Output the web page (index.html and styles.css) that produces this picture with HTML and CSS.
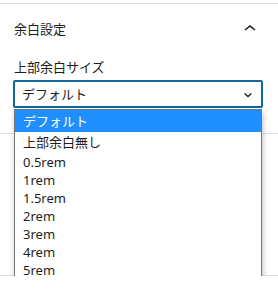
FILE: index.html
```html
<!DOCTYPE html>
<html lang="ja">
<head>
  <meta charset="UTF-8">
  <title>余白設定</title>
  <link rel="stylesheet" href="styles.css">
</head>
<body>
  <div class="sidebar">
    <section class="panel">
      <div class="panel-header">
        <span class="panel-title">余白設定</span>
        <svg class="toggle" width="24" height="24" viewBox="0 0 24 24" aria-hidden="true">
          <path d="M6.5 12.4L12 8l5.5 4.4-.9 1.2L12 10l-4.6 3.6-.9-1.2z"/>
        </svg>
      </div>
      <div class="panel-body">
        <label class="field-label" for="margin-top">上部余白サイズ</label>
        <div class="select">
          <span class="select-value">デフォルト</span>
          <svg class="select-arrow" width="8" height="5" viewBox="0 0 8 5" aria-hidden="true">
            <path d="M0.6 0.6L4 3.6 7.4 0.6" fill="none" stroke="#1e1e1e" stroke-width="1.4"/>
          </svg>
        </div>
      </div>
    </section>
    <section class="panel panel-empty"></section>

    <ul class="dropdown" role="listbox">
      <li class="option jp selected">デフォルト</li>
      <li class="option jp second">上部余白無し</li>
      <li class="option">0.5rem</li>
      <li class="option">1rem</li>
      <li class="option">1.5rem</li>
      <li class="option">2rem</li>
      <li class="option">3rem</li>
      <li class="option">4rem</li>
      <li class="option">5rem</li>
    </ul>
  </div>
</body>
</html>
```

FILE: styles.css
```css
body { margin: 0; background: #fff; font-family: "Noto Sans", "Noto Sans CJK JP", sans-serif; font-size: 13px; color: #1e1e1e;}
.sidebar { position: relative; padding-top: 3px;}
.panel { border-top: 1px solid #e0e0e0;}
.panel-header { height: 48px; padding: 0 16px 0 14px; display: flex; align-items: center; justify-content: space-between;}
.panel-title { font-size: 13px; line-height: 18px; padding-top: 2px;}
.toggle { fill: #1e1e1e; margin-top: 2px;}
.panel-body { padding: 6px 15px 25px 13px; display: flex; flex-direction: column; gap: 4px;}
.field-label { font-size: 13px; line-height: 18px; padding-left: 1px;}
.select { height: 24px; border: 2px solid #14679a; border-radius: 2px; display: flex; align-items: center; justify-content: space-between; padding: 0 9px 0 7px;}
.select-value { font-size: 13px; line-height: 18px;}
.select-arrow { margin-top: 2px;}
.panel-empty { height: 141px; border-bottom: 1px solid #e0e0e0;}
.dropdown { position: absolute; top: 109px; left: 14px; width: 246px; margin: 0; padding: 0; list-style: none; background: #fff; border: 1px solid #767676; box-shadow: 1px 3px 6px rgba(0,0,0,0.25);}
.option { height: 18px; line-height: 18px; padding-left: 8px; font-size: 13px; color: #1e1e1e;}
.option.jp { height: 21px; line-height: 21px;}
.option.selected { height: 22px; line-height: 22px; background: #1f8fff; color: #fff;}
```
